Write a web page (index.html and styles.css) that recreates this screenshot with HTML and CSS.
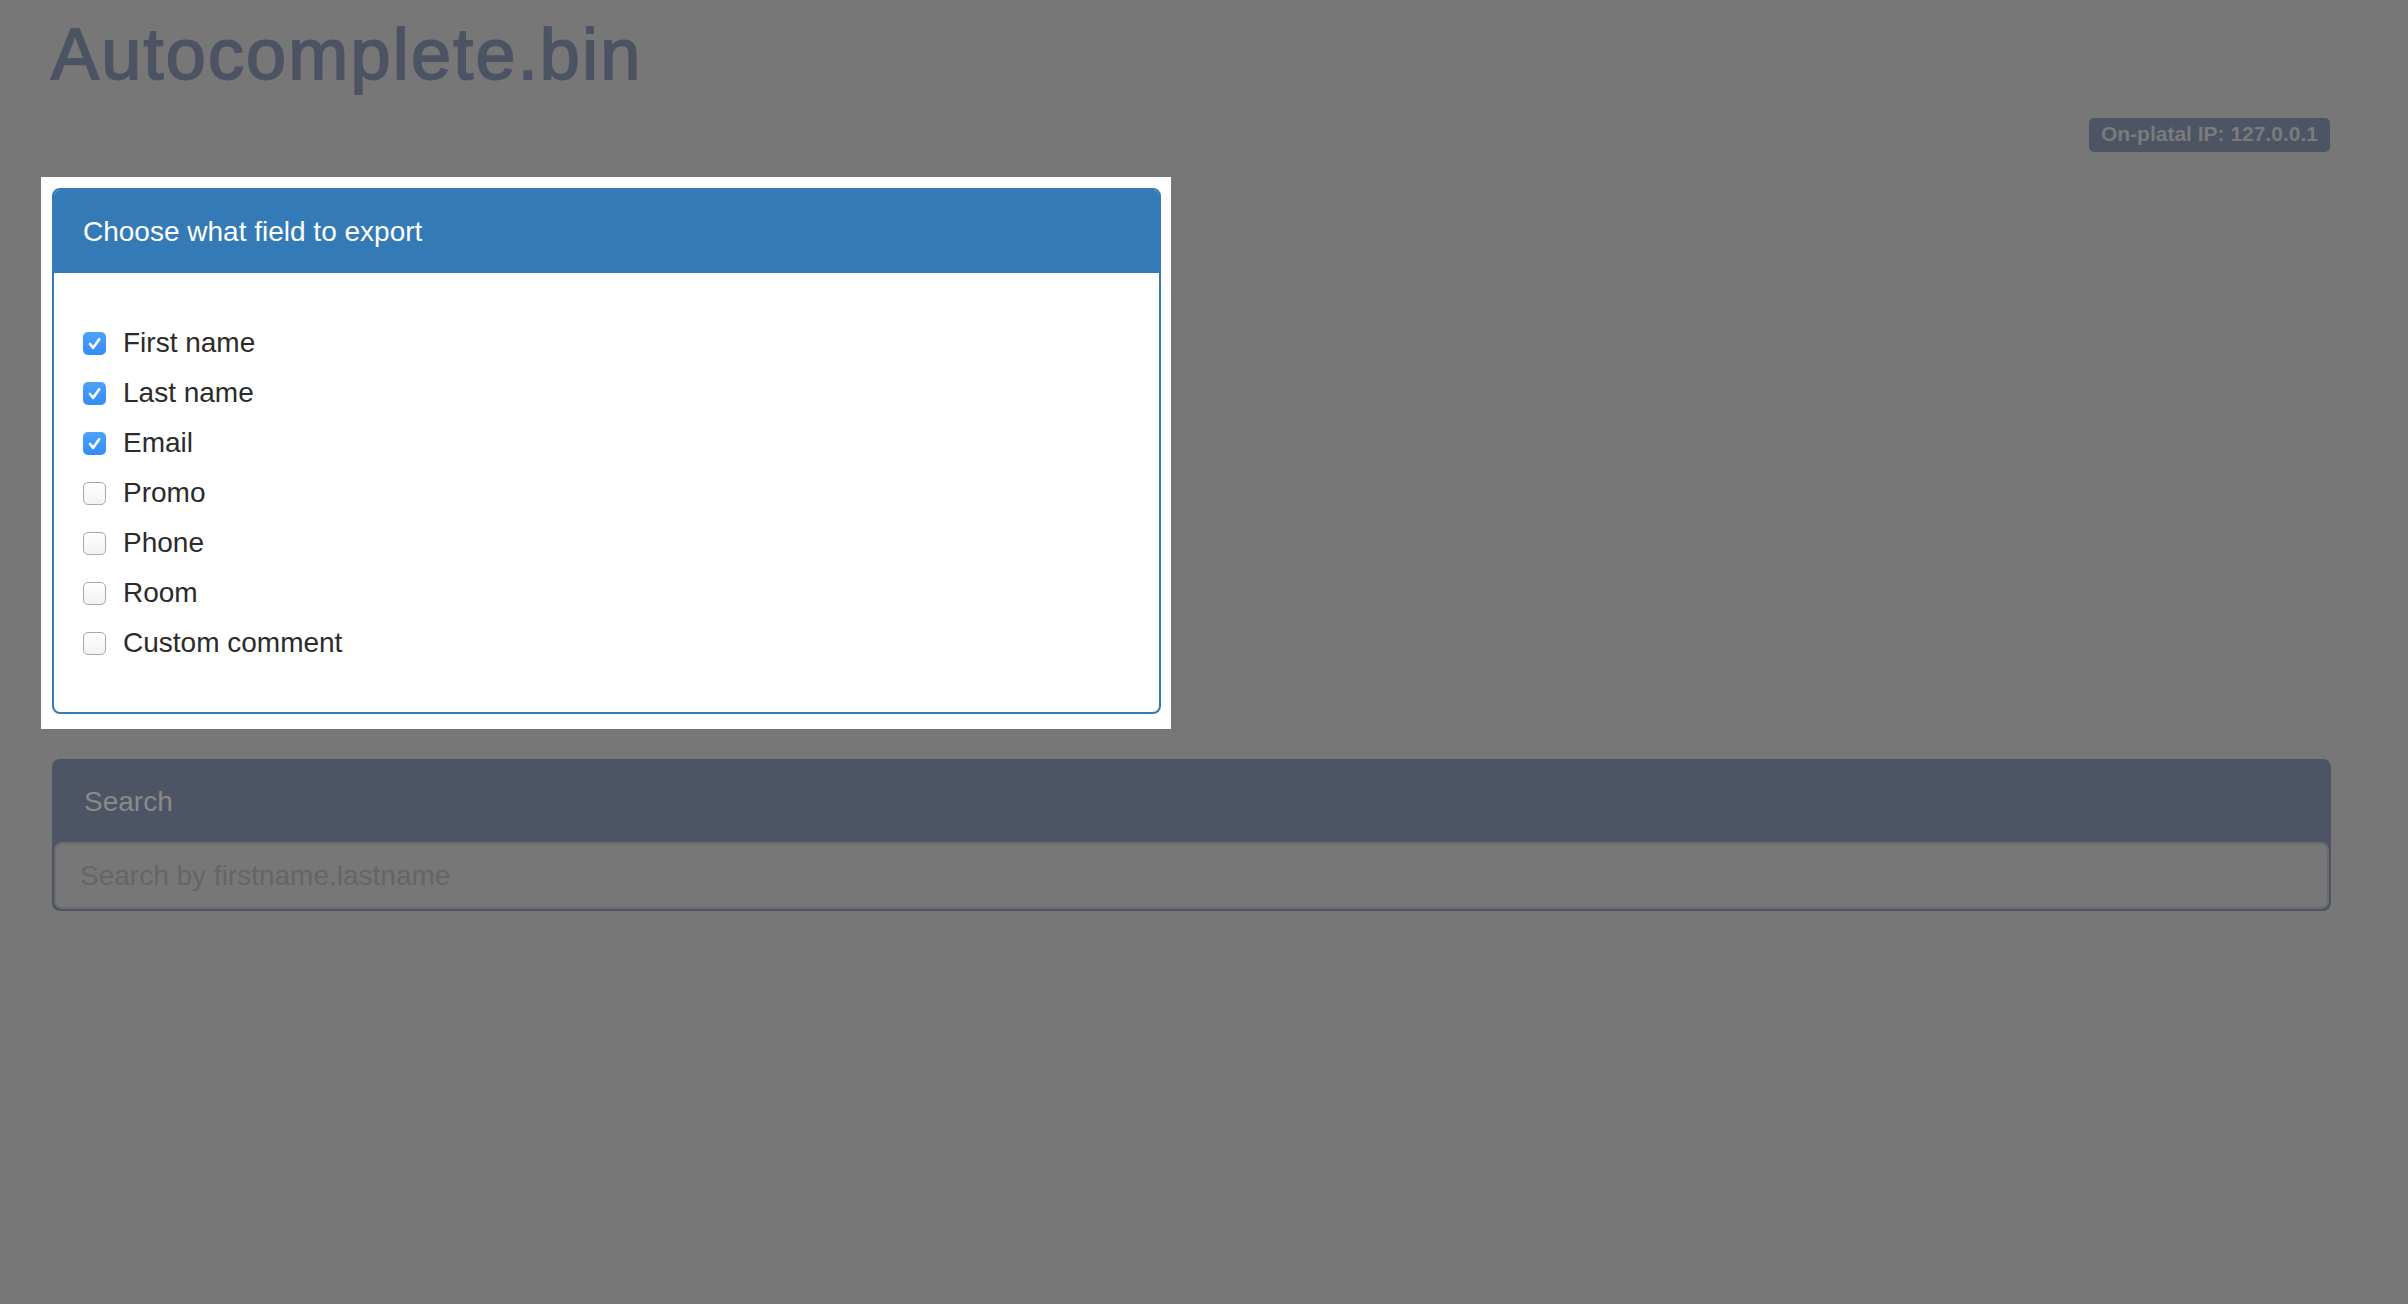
FILE: index.html
```html
<!DOCTYPE html>
<html lang="en">
<head>
<meta charset="utf-8">
<title>Autocomplete.bin</title>
<link rel="stylesheet" href="styles.css">
</head>
<body>
<div class="container">
  <h1 class="title">Autocomplete.bin</h1>
  <div class="topbar"><span class="ip-label">On-platal IP: 127.0.0.1</span></div>

  <div class="highlight">
    <div class="panel panel-primary">
      <div class="panel-heading">Choose what field to export</div>
      <div class="panel-body">
        <label class="check-row"><span class="box checked"><svg viewBox="0 0 23 23" width="23" height="23"><path d="M7 12 L10.2 15.8 L16.2 7.2" fill="none" stroke="#fff" stroke-width="2.6" stroke-linecap="round" stroke-linejoin="round"/></svg></span><span class="check-text">First name</span></label>
        <label class="check-row"><span class="box checked"><svg viewBox="0 0 23 23" width="23" height="23"><path d="M7 12 L10.2 15.8 L16.2 7.2" fill="none" stroke="#fff" stroke-width="2.6" stroke-linecap="round" stroke-linejoin="round"/></svg></span><span class="check-text">Last name</span></label>
        <label class="check-row"><span class="box checked"><svg viewBox="0 0 23 23" width="23" height="23"><path d="M7 12 L10.2 15.8 L16.2 7.2" fill="none" stroke="#fff" stroke-width="2.6" stroke-linecap="round" stroke-linejoin="round"/></svg></span><span class="check-text">Email</span></label>
        <label class="check-row"><span class="box"></span><span class="check-text">Promo</span></label>
        <label class="check-row"><span class="box"></span><span class="check-text">Phone</span></label>
        <label class="check-row"><span class="box"></span><span class="check-text">Room</span></label>
        <label class="check-row"><span class="box"></span><span class="check-text">Custom comment</span></label>
      </div>
    </div>
  </div>

  <div class="panel panel-search">
    <div class="panel-heading">Search</div>
    <input class="search-input" type="text" placeholder="Search by firstname.lastname">
  </div>
</div>
</body>
</html>
```

FILE: styles.css
```css
html, body {
  margin: 0;
  padding: 0;
}
body {
  background: #777777;
  font-family: "Liberation Sans", Arial, sans-serif;
  color: #333;
  width: 2408px;
  height: 1304px;
  overflow: hidden;
}
.container {
  padding: 0 77px 0 52px;
  display: flex;
  flex-direction: column;
  align-items: stretch;
}
.title {
  margin: 15px 0 0 -1px;
  font-size: 72px;
  line-height: 79px;
  font-weight: 400;
  letter-spacing: 2.2px;
  color: #4c5363;
  -webkit-text-stroke: 1.8px #4c5363;
}
.topbar {
  display: flex;
  justify-content: flex-end;
  margin-top: 24px;
}
.ip-label {
  display: inline-block;
  background: #4d5463;
  color: #7b7b7b;
  font-weight: 700;
  font-size: 21px;
  line-height: 24px;
  padding: 4px 12px 6px;
  border-radius: 5px;
  margin-right: 1px;
}
.highlight {
  align-self: flex-start;
  background: #ffffff;
  margin: 25px 0 0 -11px;
  padding: 11px 10px 15px 11px;
}
.panel {
  border: 2px solid;
  border-radius: 8px;
  overflow: hidden;
}
.panel-primary {
  width: 1105px;
  border-color: #337ab7;
  background: #fff;
}
.panel-heading {
  padding: 0 30px;
  font-size: 28px;
}
.panel-primary .panel-heading {
  background: #337ab7;
  color: #fff;
  height: 83px;
  line-height: 83px;
  padding-left: 29px;
}
.panel-body {
  padding: 50px 30px 49px 30px;
  display: flex;
  flex-direction: column;
  gap: 10px;
}
.check-row {
  display: flex;
  align-items: center;
  height: 40px;
  font-size: 28px;
  color: #2b2b2b;
}
.box {
  width: 23px;
  height: 23px;
  flex: none;
  box-sizing: border-box;
  border: 1.5px solid #a9a9a9;
  border-radius: 5px;
  background: linear-gradient(#ffffff, #f2f2f2);
  margin-left: -1px;
  margin-right: 17px;
  display: flex;
  align-items: center;
  justify-content: center;
}
.box.checked {
  border: none;
  background: linear-gradient(#4da2fb, #338cf6);
}
.box svg {
  display: block;
}
.check-text {
  line-height: 40px;
}
.panel-search {
  margin-top: 30px;
  border-color: #4d5463;
  background: #4d5463;
}
.panel-search .panel-heading {
  background: #4d5463;
  color: #8a8a8a;
  height: 81px;
  line-height: 81px;
}
.search-input {
  display: block;
  box-sizing: border-box;
  width: 100%;
  height: 67px;
  margin: 0;
  border: 2px solid #6c6c6c;
  border-radius: 8px;
  background: #777777;
  padding: 0 24px;
  font-family: "Liberation Sans", Arial, sans-serif;
  font-size: 28px;
  color: #555;
  outline: none;
}
.search-input::placeholder {
  color: #656565;
  opacity: 1;
}
```
